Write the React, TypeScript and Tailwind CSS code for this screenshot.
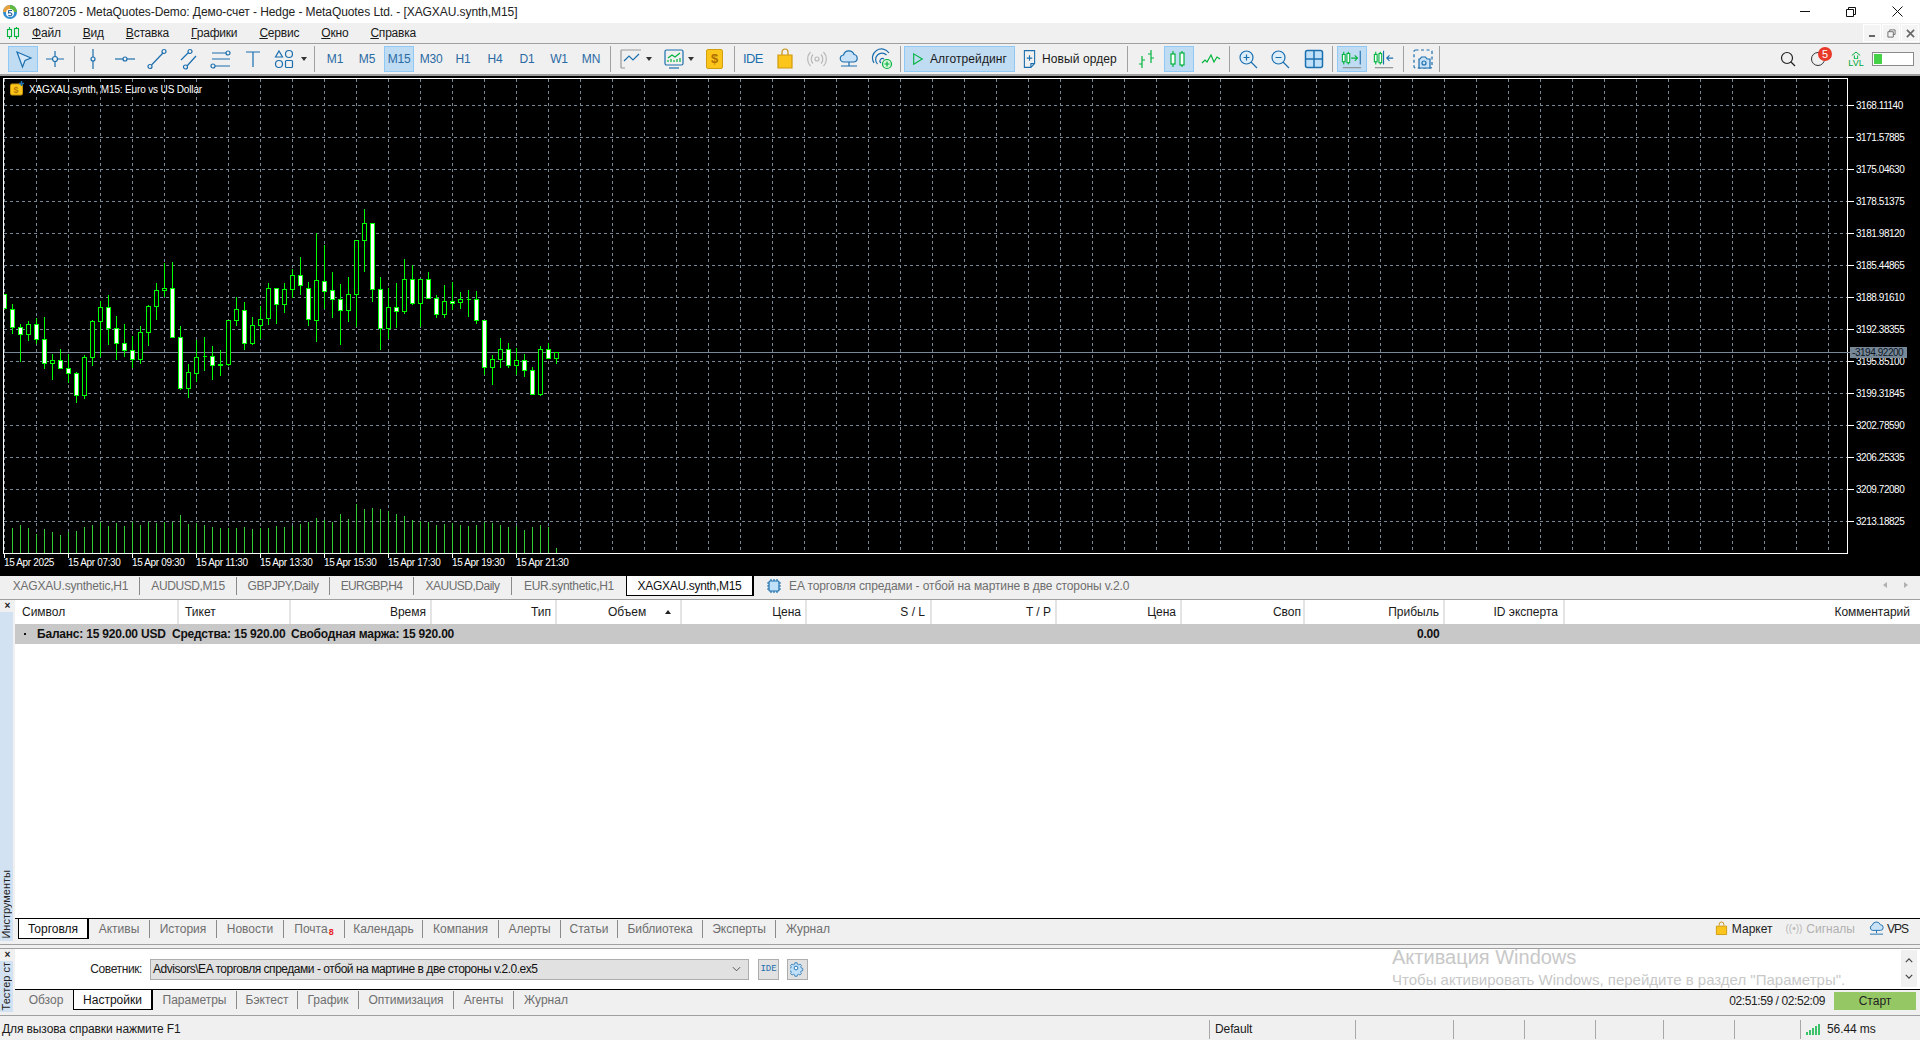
import type { ReactNode } from 'react';

const BLUE = '#1c6fae';
const GREEN = '#00b43c';

// [wick top, body top, body bottom, wick bottom, filled]
const CANDLES: [number, number, number, number, boolean][] = [
  [283, 283, 325, 325, true], [312, 328, 382, 402, true], [372, 380, 403, 485, true], [363, 373, 403, 423, false],
  [355, 373, 418, 432, true], [352, 418, 490, 507, true], [462, 481, 490, 540, false], [447, 481, 505, 508, true],
  [462, 505, 520, 550, true], [517, 520, 586, 608, true], [465, 472, 586, 597, false], [360, 364, 472, 497, false],
  [302, 322, 364, 470, false], [285, 322, 385, 435, true], [348, 385, 430, 480, true], [372, 430, 451, 470, true],
  [408, 451, 478, 505, true], [378, 397, 478, 492, false], [316, 319, 397, 438, false], [249, 271, 319, 360, false],
  [190, 265, 271, 290, false], [186, 265, 412, 412, true], [378, 412, 565, 570, true], [492, 517, 565, 594, false],
  [420, 472, 520, 545, false], [411, 469, 469, 513, false], [438, 469, 496, 540, true], [450, 492, 496, 528, true],
  [360, 361, 493, 497, false], [292, 328, 361, 378, false], [306, 331, 430, 450, true], [351, 376, 430, 435, false],
  [319, 358, 376, 417, false], [249, 265, 355, 375, false], [265, 265, 313, 372, true], [249, 268, 313, 339, false],
  [207, 226, 268, 295, false], [171, 226, 256, 285, true], [247, 265, 358, 378, true], [100, 241, 361, 426, false],
  [135, 244, 274, 327, true], [216, 271, 298, 354, true], [252, 298, 331, 435, true], [231, 283, 331, 366, false],
  [121, 121, 283, 381, false], [27, 70, 121, 216, false], [70, 70, 268, 306, true], [232, 268, 385, 450, true],
  [264, 322, 385, 417, false], [249, 322, 334, 385, true], [178, 238, 334, 342, false], [196, 238, 310, 315, true],
  [238, 238, 310, 381, false], [216, 238, 295, 298, true], [285, 295, 343, 354, true], [255, 304, 343, 354, false],
  [246, 304, 308, 330, true], [276, 298, 307, 327, false], [270, 298, 298, 351, false], [273, 298, 361, 372, true],
  [361, 361, 502, 525, true], [465, 478, 502, 555, false], [414, 448, 478, 504, false], [430, 448, 496, 504, true],
  [444, 481, 496, 525, false], [462, 481, 511, 531, true], [502, 511, 583, 585, true], [438, 448, 583, 587, false],
  [428, 448, 475, 478, true], [457, 457, 475, 492, false],
];

const VOLUMES = [
  83, 75, 83, 102, 87, 96, 105, 96, 93, 81, 75, 65, 78, 69, 78, 65, 75, 65, 69, 65, 65, 45, 71, 69, 75, 81, 84, 84, 84,
  81, 87, 84, 84, 78, 81, 78, 72, 65, 54, 60, 65, 42, 57, 12, 27, 24, 27, 33, 42, 48, 60, 63, 65, 75, 72, 69, 75, 78,
  75, 66, 69, 75, 81, 78, 90, 81, 75, 81, 145,
];

const PRICES = [
  '3168.11140', '3171.57885', '3175.04630', '3178.51375', '3181.98120', '3185.44865', '3188.91610',
  '3192.38355', '3195.85100', '3199.31845', '3202.78590', '3206.25335', '3209.72080', '3213.18825',
];

const TIMES = [
  '15 Apr 2025', '15 Apr 07:30', '15 Apr 09:30', '15 Apr 11:30', '15 Apr 13:30',
  '15 Apr 15:30', '15 Apr 17:30', '15 Apr 19:30', '15 Apr 21:30',
];

function Chart() {
  const rows = PRICES.map((_, i) => 105.5 + 32 * i);
  const cols = Array.from({ length: 58 }, (_, i) => 4.5 + 32 * i);
  return (
    <svg width="1920" height="499" viewBox="0 76 1920 499" className="block" shapeRendering="crispEdges">
      <defs>
        <clipPath id="plot">
          <rect x="4" y="79" width="1843" height="474" />
        </clipPath>
      </defs>
      <rect x="0" y="76" width="1920" height="499" fill="#000" />
      {cols.map((x) => (
        <line key={x} x1={x} x2={x} y1="79" y2="553" stroke="#778899" strokeDasharray="3 3" />
      ))}
      {rows.map((y) => (
        <line key={y} x1="4" x2="1847" y1={y} y2={y} stroke="#778899" strokeDasharray="3 3" />
      ))}
      <g clipPath="url(#plot)">
        {VOLUMES.map((v, i) => (
          <line key={i} x1={12.5 + 8 * i} x2={12.5 + 8 * i} y1={500 + v / 3} y2="553" stroke="#32cd32" />
        ))}
        <line x1="4" x2="1847" y1="352.5" y2="352.5" stroke="#778899" />
        {CANDLES.map(([wt, bt, bb, wb, filled], i) => {
          const x = 4.5 + 8 * i;
          const top = Math.round(200 + bt / 3) + 0.5;
          const bot = Math.round(200 + bb / 3) + 0.5;
          return (
            <g key={i}>
              <line x1={x} x2={x} y1={200 + wt / 3} y2={200 + wb / 3} stroke="#00ff00" />
              <path
                d={`M${x - 2} ${top}H${x + 2}V${bot}H${x - 2}Z`}
                fill={filled ? '#fff' : '#000'}
                stroke="#00ff00"
              />
            </g>
          );
        })}
      </g>
      <rect x="3.5" y="78.5" width="1844" height="475" fill="none" stroke="#fff" />
      {rows.map((y) => (
        <line key={y} x1="1847" x2="1854" y1={y} y2={y} stroke="#fff" />
      ))}
      {TIMES.map((_, i) => {
        const x = i === 0 ? 4.5 : 68.5 + 64 * (i - 1);
        return <line key={i} x1={x} x2={x} y1="553" y2="558" stroke="#fff" />;
      })}
      <g fontSize="10" fill="#fff" fontFamily="'Liberation Sans', sans-serif" shapeRendering="auto">
        {PRICES.map((p, i) => (
          <text key={p} x="1856" y={rows[i] + 3.5} letterSpacing="-0.45">
            {p}
          </text>
        ))}
        {TIMES.map((t, i) => (
          <text key={t} x={i === 0 ? 4 : 68 + 64 * (i - 1)} y="566" letterSpacing="-0.35">
            {t}
          </text>
        ))}
        <text x="29" y="93" letterSpacing="-0.15">
          XAGXAU.synth, M15:  Euro vs US Dollar
        </text>
      </g>
      <rect x="1850" y="347" width="57" height="11" fill="#778899" />
      <line x1="1847" x2="1850" y1="352.5" y2="352.5" stroke="#778899" />
      <text x="1852" y="356" fontSize="10" fill="#0b1520" letterSpacing="-0.45" fontFamily="'Liberation Sans', sans-serif" shapeRendering="auto">
        -3194.92200
      </text>
      <g shapeRendering="auto">
        <rect x="10.5" y="84" width="12" height="11" rx="1.5" fill="#fbc51b" stroke="#c8960c" />
        <text x="13.5" y="93" fontSize="9" fontWeight="700" fill="#b87a00" fontFamily="'Liberation Sans', sans-serif">
          $
        </text>
        <path d="M21.5 81v5M19 83.500h5" stroke="#1c6fae" strokeWidth="1.500" />
      </g>
    </svg>
  );
}

function Ic({ children, className = 'w-[22px] h-[22px]', box = '0 0 22 22' }: { children: ReactNode; className?: string; box?: string }) {
  return (
    <svg viewBox={box} className={`${className} shrink-0`} fill="none" stroke={BLUE} strokeWidth="1.200">
      {children}
    </svg>
  );
}

function Btn({ children, active, className = 'w-[32px]' }: { children: ReactNode; active?: boolean; className?: string }) {
  return (
    <div className={`${className} h-[26px] shrink-0 flex items-center justify-center`}>
      <div className={`w-[30px] h-[26px] flex items-center justify-center border ${active ? 'bg-[#c0dcf3] border-[#90c8f6]' : 'border-transparent'}`}>
        {children}
      </div>
    </div>
  );
}

function Sep({ className = 'w-[6px]' }: { className?: string }) {
  return (
    <div className={`${className} h-[26px] shrink-0 flex justify-center`}>
      <div className="w-px h-full bg-[#a0a0a0]" />
    </div>
  );
}

function Caret() {
  return <div className="w-0 h-0 border-x-[3.500px] border-x-transparent border-t-[4px] border-t-[#333] shrink-0" />;
}

function Period({ label, active }: { label: string; active?: boolean }) {
  return (
    <Btn active={active}>
      <span className="text-[#2a6aa3] tracking-[-0.2px]">{label}</span>
    </Btn>
  );
}

function Candles({ stroke = GREEN }: { stroke?: string }) {
  return (
    <g stroke={stroke}>
      <path d="M5 3v16M14 3v16" />
      <rect x="3" y="6" width="4" height="10" fill="#fff" />
      <rect x="12" y="5" width="4" height="12" fill="#fff" />
    </g>
  );
}

function Toolbar() {
  return (
    <div className="h-[31px] border-t border-[#a0a0a0] flex items-center pl-[7px] shrink-0">
      <Btn active>
        <Ic>
          <path d="M5 4l14 6-6 2.500L10.500 19z" fill="#d8eafa" />
        </Ic>
      </Btn>
      <Btn>
        <Ic>
          <path d="M11 3v16M2 11h18" />
          <circle cx="11" cy="11" r="2.500" fill="#f0f0f0" />
        </Ic>
      </Btn>
      <Sep />
      <Btn>
        <Ic>
          <path d="M11 1v20" />
          <circle cx="11" cy="11" r="2" fill="#f0f0f0" />
        </Ic>
      </Btn>
      <Btn>
        <Ic>
          <path d="M1 11h20" />
          <circle cx="11" cy="11" r="2" fill="#f0f0f0" />
        </Ic>
      </Btn>
      <Btn>
        <Ic>
          <path d="M5.500 17L17 5" />
          <circle cx="4" cy="18.500" r="2" />
          <circle cx="18" cy="3.500" r="2" />
        </Ic>
      </Btn>
      <Btn>
        <Ic>
          <path d="M3 12l7-7M9 18l9-10" />
          <circle cx="12" cy="3.500" r="2" />
          <circle cx="7.500" cy="19" r="2" />
        </Ic>
      </Btn>
      <Btn>
        <Ic>
          <path d="M2 5h14M2 11h18M5 18h15" />
          <circle cx="18" cy="5" r="2" />
          <circle cx="3" cy="18" r="2" />
        </Ic>
      </Btn>
      <Btn>
        <Ic>
          <path d="M4 4h14M11 4v15" />
        </Ic>
      </Btn>
      <div className="w-[40px] h-[26px] shrink-0 flex items-center pl-[4px] gap-[6px]">
        <Ic>
          <path d="M6 3l3.500 6h-7z" />
          <circle cx="16" cy="6" r="3.500" />
          <circle cx="6" cy="16" r="3.500" />
          <rect x="12.500" y="12.500" width="7" height="7" rx="1" />
        </Ic>
        <Caret />
      </div>
      <Sep className="w-[10px]" />
      {['M1', 'M5'].map((p) => <Period key={p} label={p} />)}
      <Period label="M15" active />
      {['M30', 'H1', 'H4', 'D1', 'W1', 'MN'].map((p) => <Period key={p} label={p} />)}
      <Sep />
      <div className="w-[44px] h-[26px] shrink-0 flex items-center gap-[4px] pl-[7px]">
        <Ic>
          <path d="M1 2h20M1 2v18M1 20h4" stroke="#999" />
          <path d="M4 13l5-5 4 4 6-6" />
        </Ic>
        <Caret />
      </div>
      <div className="w-[40px] h-[26px] shrink-0 flex items-center gap-[3px] pl-[6px]">
        <Ic>
          <rect x="2" y="2" width="18" height="15" rx="1.500" />
          <path d="M5 10l4-3 3 2 5-4" stroke={GREEN} />
          <path d="M5 14v-2M8 14v-3M11 14v-2M14 14v-3M17 14v-4" stroke={GREEN} />
          <path d="M6 20h10" />
        </Ic>
        <Caret />
      </div>
      <Btn className="w-[33px] ml-px">
        <div className="w-[17px] h-[20px] rounded-[2px] bg-[#fbc51b] border border-[#d2a00f] flex items-center justify-center text-[#b06f00] font-bold text-[13px]">$</div>
      </Btn>
      <Sep />
      <Btn>
        <span className="text-[#1c6fae] text-[13px] tracking-[-0.6px]">IDE</span>
      </Btn>
      <Btn>
        <Ic>
          <path d="M8 7V4a3 3 0 0 1 6 0v3" stroke="#c89010" />
          <path d="M4 7h14v13H4z" fill="#fbc51b" stroke="#d19b10" />
        </Ic>
      </Btn>
      <Btn>
        <Ic>
          <g stroke="#b8b8b8">
            <circle cx="11" cy="11" r="2" />
            <path d="M7 6.500a6.500 6.500 0 0 0 0 9M15 6.500a6.500 6.500 0 0 1 0 9M4.500 4a10 10 0 0 0 0 14M17.500 4a10 10 0 0 1 0 14" />
          </g>
        </Ic>
      </Btn>
      <Btn>
        <Ic>
          <path d="M6 14a3.500 3.500 0 0 1-.5-7 5.500 5.500 0 0 1 10.500-.5 3.800 3.800 0 0 1 0 7.500z" fill="#c9e2f7" />
          <path d="M11 14v4M3 18h16" />
        </Ic>
      </Btn>
      <Btn className="w-[32px] ml-px">
        <Ic>
          <path d="M3 15a9 9 0 0 1 15-10M6.500 16a6 6 0 0 1 9-9M10 15a2.500 2.500 0 0 1 3-4" />
          <circle cx="16" cy="16" r="4.500" fill="#d6f5dc" stroke={GREEN} />
          <path d="M16 13.500v5M13.500 16h5" stroke={GREEN} />
        </Ic>
      </Btn>
      <Sep className="w-[5px]" />
      <div className="ml-px w-[111px] h-[26px] shrink-0 flex items-center bg-[#c0dcf3] border border-[#90c8f6] pl-[7px] gap-[6px]">
        <svg viewBox="0 0 14 16" className="w-[12px] h-[14px] shrink-0" fill="none" stroke={GREEN} strokeWidth="1.300">
          <path d="M2 2l10 6-10 6z" />
        </svg>
        <span className="text-[#1a1a1a] tracking-[0.1px]">Алготрейдинг</span>
      </div>
      <div className="w-[110px] h-[26px] shrink-0 flex items-center pl-[8px] gap-[6px]">
        <svg viewBox="0 0 14 20" className="w-[13px] h-[20px] shrink-0" fill="none" stroke={BLUE} strokeWidth="1.200">
          <path d="M1.500 1h11v14l-4 4h-7zM12.500 15h-4v4M7 6v6M4 9h6" />
        </svg>
        <span className="text-[#1a1a1a] tracking-[0.1px]">Новый ордер</span>
      </div>
      <Sep className="w-[5px]" />
      <div className="w-px shrink-0" />
      <Btn>
        <Ic>
          <g stroke={GREEN}>
            <path d="M6 8v12M3 16h3M6 12h3M15 2v13M12 6h3M15 10h3" />
          </g>
        </Ic>
      </Btn>
      <Btn active>
        <Ic>
          <Candles />
        </Ic>
      </Btn>
      <Btn>
        <Ic>
          <path d="M2 15l3-3 2 2 4-7 3 7 3-5 3 2" stroke={GREEN} />
        </Ic>
      </Btn>
      <Sep className="w-[5px]" />
      <Btn>
        <Ic>
          <circle cx="9.500" cy="9.500" r="6.500" fill="#dcedfb" />
          <path d="M14 14l6 6M9.500 6.500v6M6.500 9.500h6" />
        </Ic>
      </Btn>
      <Btn>
        <Ic>
          <circle cx="9.500" cy="9.500" r="6.500" fill="#dcedfb" />
          <path d="M14 14l6 6M6.500 9.500h6" />
        </Ic>
      </Btn>
      <Btn className="w-[33px] ml-px">
        <Ic>
          <rect x="2.500" y="2.500" width="17" height="17" rx="2" fill="#bfe0f8" strokeWidth="1.500" />
          <path d="M11 2.500v17M2.500 11h17" strokeWidth="1.500" />
        </Ic>
      </Btn>
      <Sep className="w-[5px]" />
      <div className="w-px shrink-0" />
      <Btn active>
        <Ic box="0 0 24 22">
          <g stroke={GREEN}>
            <path d="M3 3v14M8 3v14" />
            <rect x="1.500" y="6" width="3" height="8" fill="#fff" />
            <rect x="6.500" y="5" width="3" height="10" fill="#fff" />
            <path d="M11 10h7M15 7l3 3-3 3" />
          </g>
          <path d="M21 2v15" />
          <path d="M2 20.500h20" stroke="#8a8a8a" />
        </Ic>
      </Btn>
      <Btn>
        <Ic box="0 0 24 22">
          <g stroke={GREEN}>
            <path d="M3 3v14M8 3v14" />
            <rect x="1.500" y="6" width="3" height="8" fill="#fff" />
            <rect x="6.500" y="5" width="3" height="10" fill="#fff" />
          </g>
          <path d="M11.500 2v15M22 10h-7M18 7l-3 3 3 3" />
          <path d="M2 20.500h20" stroke="#8a8a8a" />
        </Ic>
      </Btn>
      <Sep />
      <div className="w-px shrink-0" />
      <Btn>
        <Ic>
          <rect x="2" y="2" width="18" height="18" rx="1.500" strokeDasharray="3 2.500" />
          <path d="M8 11l1.500-2h4l1.500 2h3v9H7v-9z" fill="#c9e2f7" />
          <circle cx="12" cy="15" r="2" />
        </Ic>
      </Btn>
      <div className="w-px h-[26px] bg-[#a0a0a0] shrink-0" />
      <div className="ml-auto flex items-center h-[26px] pr-[6px] shrink-0">
        <svg viewBox="0 0 16 16" className="w-[16px] h-[16px]" fill="none" stroke="#222" strokeWidth="1.200">
          <circle cx="7" cy="7" r="5.500" />
          <path d="M11 11l4 4" />
        </svg>
        <div className="relative w-[14px] h-[14px] ml-[15px] rounded-full border border-[#333]">
          <div className="absolute top-[-6px] left-[6px] w-[14px] h-[14px] rounded-full bg-[#e8392a] text-white text-[11px] leading-[14px] text-center">5</div>
        </div>
        <div className="ml-[24px] w-[14px] flex flex-col items-center text-[#00a838] text-[9px] leading-[9px]">
          <svg viewBox="0 0 12 9" className="w-[10px] h-[8px]" fill="none" stroke={GREEN} strokeWidth="1.200">
            <path d="M1 5l5-4 5 4M4 5v4h4V5" />
          </svg>
          LVL
        </div>
        <div className="ml-[9px] w-[42px] h-[14px] border border-[#8a8a8a] bg-white p-px">
          <div className="w-[8px] h-full bg-[#46d246]" />
        </div>
      </div>
    </div>
  );
}

function MdiButton({ children }: { children: ReactNode }) {
  return <div className="w-[18px] h-[18px] bg-[#f4f4f4] border border-white flex items-center justify-center">{children}</div>;
}

function Menu() {
  const items: [string, string][] = [
    ['Ф', 'айл'], ['В', 'ид'], ['В', 'ставка'], ['Г', 'рафики'], ['С', 'ервис'], ['О', 'кно'], ['С', 'правка'],
  ];
  return (
    <div className="h-[20px] flex items-center shrink-0 pl-[6px]">
      <svg viewBox="0 0 14 14" className="w-[14px] h-[14px] mr-[12px]" fill="none" stroke={GREEN} strokeWidth="1.100">
        <path d="M3.500 1v12M10.500 1v12" />
        <rect x="1.500" y="3.500" width="4" height="7" fill="#f0f0f0" />
        <rect x="8.500" y="2.500" width="4" height="8" fill="#f0f0f0" />
      </svg>
      <div className="flex gap-[22px] text-[#1a1a1a] tracking-[-0.2px]">
        {items.map(([a, b], i) => (
          <span key={i}>
            <span className="underline">{a}</span>
            {b}
          </span>
        ))}
      </div>
      <div className="ml-auto flex gap-px pr-px">
        <MdiButton><div className="w-[6px] h-[2px] bg-[#666] mt-[6px]" /></MdiButton>
        <MdiButton>
          <svg viewBox="0 0 10 10" className="w-[9px] h-[9px]" fill="none" stroke="#666"><path d="M3 3V1h6v5H7M1 3h6v6H1z" /></svg>
        </MdiButton>
        <MdiButton>
          <svg viewBox="0 0 10 10" className="w-[9px] h-[9px]" fill="none" stroke="#666" strokeWidth="1.800"><path d="M1 1l8 8M9 1l-8 8" /></svg>
        </MdiButton>
      </div>
    </div>
  );
}

function TitleBar() {
  return (
    <div className="h-[23px] bg-white flex items-center shrink-0 pl-[2px]">
      <svg viewBox="0 0 16 16" className="w-[16px] h-[16px] mr-[5px]">
        <circle cx="8" cy="8" r="7" fill="#2f8ed1" />
        <path d="M8 1a7 7 0 0 1 7 7H8z" fill="#63b93f" />
        <path d="M1 8a7 7 0 0 1 7-7v7z" fill="#e9a13b" />
        <circle cx="8" cy="9" r="4" fill="#fff" />
        <path d="M10 6.500H6.800l-.3 2.500c2-.7 3.400 0 3.400 1.300 0 1.500-2 2-3.500 1" fill="none" stroke="#1d5f98" strokeWidth="1.100" />
      </svg>
      <span className="text-[#222] tracking-[-0.08px]">81807205 - MetaQuotes-Demo: Демо-счет - Hedge - MetaQuotes Ltd. - [XAGXAU.synth,M15]</span>
      <div className="ml-auto flex h-full">
        <div className="w-[46px] flex items-center justify-center"><div className="w-[10px] h-px bg-[#111]" /></div>
        <div className="w-[46px] flex items-center justify-center">
          <svg viewBox="0 0 10 10" className="w-[10px] h-[10px]" fill="none" stroke="#111"><path d="M2.500 2.500V.5h7v7h-2M.5 2.500h7v7h-7z" /></svg>
        </div>
        <div className="w-[46px] flex items-center justify-center">
          <svg viewBox="0 0 11 11" className="w-[11px] h-[11px]" fill="none" stroke="#111"><path d="M.5.5l10 10M10.500.5l-10 10" /></svg>
        </div>
      </div>
    </div>
  );
}

// vertical divider between inactive tabs sits on the right edge
function Tab({ label, className, sep = true, children }: { label: string; className: string; sep?: boolean; children?: ReactNode }) {
  return (
    <div className={`${className} h-[18px] shrink-0 flex items-center justify-center text-[#6e6e6e] ${sep ? 'border-r border-[#8a8a8a]' : ''}`}>
      {label}
      {children}
    </div>
  );
}

function ActiveTab({ label, className }: { label: string; className: string }) {
  return (
    <div className={`${className} h-[20px] shrink-0 flex items-center justify-center bg-white text-[#111] border-x border-b border-black border-r-2`}>
      {label}
    </div>
  );
}

function ChartTabs() {
  return (
    <div className="h-[21px] border-t border-black flex items-start pl-[2px] shrink-0 relative">
      <div className="flex items-center h-[19px]">
        <Tab label="XAGXAU.synthetic,H1" className="w-[138px] tracking-[-0.2px]" />
        <Tab label="AUDUSD,M15" className="w-[97px] tracking-[-0.4px]" />
        <Tab label="GBPJPY,Daily" className="w-[93px] tracking-[-0.4px]" />
        <Tab label="EURGBP,H4" className="w-[84px] tracking-[-0.7px]" />
        <Tab label="XAUUSD,Daily" className="w-[98px] tracking-[-0.5px]" />
        <Tab label="EUR.synthetic,H1" className="w-[114px] tracking-[-0.3px]" sep={false} />
      </div>
      <ActiveTab label="XAGXAU.synth,M15" className="w-[128px] tracking-[-0.3px]" />
      <div className="flex items-center h-[19px] pl-[12px] text-[#6e6e6e] tracking-[-0.1px]">
        <svg viewBox="0 0 16 16" className="w-[16px] h-[16px] mr-[7px]" fill="#bfe0f8" stroke={BLUE} strokeWidth="1.200">
          <rect x="3" y="3" width="10" height="10" rx="1" />
          <path d="M1 5h2M1 8h2M1 11h2M13 5h2M13 8h2M13 11h2M5 1v2M8 1v2M11 1v2M5 13v2M8 13v2M11 13v2" />
        </svg>
        EA торговля спредами - отбой на мартине в две стороны v.2.0
      </div>
      <div className="absolute right-[12px] top-[6px] flex gap-[17px]">
        <div className="w-0 h-0 border-y-[3.500px] border-y-transparent border-r-[4px] border-r-[#b0b0b0]" />
        <div className="w-0 h-0 border-y-[3.500px] border-y-transparent border-l-[4px] border-l-[#b0b0b0]" />
      </div>
    </div>
  );
}

const COLUMNS: [string, string][] = [
  ['Символ', 'w-[164px] justify-start pl-[7px]'],
  ['Тикет', 'w-[112px] justify-start pl-[6px]'],
  ['Время', 'w-[141px] justify-end pr-[4px]'],
  ['Тип', 'w-[125px] justify-end pr-[4px]'],
  ['Объем', 'w-[125px] justify-start pl-[5px]'],
  ['Цена', 'w-[125px] justify-end pr-[4px]'],
  ['S / L', 'w-[125px] justify-end pr-[5px]'],
  ['T / P', 'w-[125px] justify-end pr-[4px]'],
  ['Цена', 'w-[125px] justify-end pr-[4px]'],
  ['Своп', 'w-[123px] justify-end pr-[2px]'],
  ['Прибыль', 'w-[140px] justify-end pr-[4px]'],
  ['ID эксперта', 'w-[120px] justify-end pr-[5px]'],
];

function TradeTable() {
  return (
    <div className="flex-1 bg-white min-h-0">
      <div className="h-[24px] flex text-[#1a1a1a]">
        {COLUMNS.map(([label, cls], i) => (
          <div key={i} className={`${cls} shrink-0 flex items-center border-r-2 border-[#e4e4e4]`}>
            {label === 'Объем' ? (
              <>
                <span className="ml-[46px]">{label}</span>
                <div className="ml-[19px] w-0 h-0 border-x-[3.500px] border-x-transparent border-b-[4px] border-b-[#222]" />
              </>
            ) : (
              label
            )}
          </div>
        ))}
        <div className="flex-1 flex items-center justify-end pr-[10px]">Комментарий</div>
      </div>
      <div className="h-[20px] bg-[#c8c8c8] flex items-center font-bold text-[#111] tracking-[-0.2px] relative">
        <div className="w-[2px] h-[2px] bg-[#111] ml-[9px] mr-[11px]" />
        <span className="w-[135px] shrink-0">Баланс: 15 920.00 USD</span>
        <span className="w-[119px] shrink-0">Средства: 15 920.00</span>
        <span>Свободная маржа: 15 920.00</span>
        <span className="absolute left-[1402px] top-[3px]">0.00</span>
      </div>
    </div>
  );
}

function SideStrip({ label, blueClass }: { label: string; blueClass: string }) {
  return (
    <div className="w-[15px] shrink-0 flex flex-col">
      <div className="h-[12px] shrink-0 flex items-center justify-center font-bold text-[10px] leading-none text-[#222]">×</div>
      <div className={`${blueClass} w-[13px] flex items-end justify-center bg-[#d3e2f2] pb-[2px]`}>
        <span className="[writing-mode:vertical-rl] rotate-180 text-[11px] leading-[13px] text-[#222] whitespace-nowrap">{label}</span>
      </div>
    </div>
  );
}

function Toolbox() {
  return (
    <div className="h-[341px] flex shrink-0">
      <SideStrip label="Инструменты" blueClass="h-[329px]" />
      <div className="flex-1 flex flex-col min-w-0">
        <TradeTable />
        <div className="h-[23px] border-t border-black flex items-start pl-[3px] relative shrink-0">
          <ActiveTab label="Торговля" className="w-[71px]" />
          <div className="flex items-center h-[19px]">
            <Tab label="Активы" className="w-[61px]" />
            <Tab label="История" className="w-[67px]" />
            <Tab label="Новости" className="w-[67px]" />
            <Tab label="Почта" className="w-[61px]">
              <span className="text-[#e81e1e] text-[9px] font-bold mt-[7px] ml-px">8</span>
            </Tab>
            <Tab label="Календарь" className="w-[78px]" />
            <Tab label="Компания" className="w-[76px]" />
            <Tab label="Алерты" className="w-[62px]" />
            <Tab label="Статьи" className="w-[57px]" />
            <Tab label="Библиотека" className="w-[85px]" />
            <Tab label="Эксперты" className="w-[73px]" />
            <Tab label="Журнал" className="w-[64px]" sep={false} />
          </div>
          <div className="ml-auto h-[19px] flex items-center pr-[12px] text-[#222]">
            <svg viewBox="0 0 14 16" className="w-[13px] h-[15px] mr-[4px]" fill="none">
              <path d="M4.500 5V3.500a2.500 2.500 0 0 1 5 0V5" stroke="#c89010" />
              <path d="M1.500 5.500h11v9h-11z" fill="#fbc51b" stroke="#d19b10" />
            </svg>
            <span className="mr-[13px]">Маркет</span>
            <span className="text-[#b8b8b8] text-[10px] mr-[4px]">((•))</span>
            <span className="text-[#b0b0b0] mr-[13px]">Сигналы</span>
            <svg viewBox="0 0 18 16" className="w-[17px] h-[15px] mr-[2px]" fill="#c9e2f7" stroke={BLUE}>
              <path d="M5 10a2.800 2.800 0 0 1-.5-5.500 4.500 4.500 0 0 1 8.600-.5 3 3 0 0 1 0 6z" />
              <path d="M9 10v3M2 14h14" />
            </svg>
            <span className="tracking-[-1px]">VPS</span>
          </div>
        </div>
      </div>
    </div>
  );
}

function Tester() {
  return (
    <div className="h-[63px] flex shrink-0">
      <SideStrip label="Тестер ст" blueClass="h-[51px]" />
      <div className="flex-1 flex flex-col min-w-0">
        <div className="h-[40px] bg-white flex items-center relative shrink-0">
          <span className="w-[127px] text-right text-[#222] shrink-0 tracking-[-0.4px]">Советник:</span>
          <div className="ml-[8px] w-[599px] h-[21px] shrink-0 bg-[#e1e1e1] border border-[#adadad] flex items-center pl-[2px] text-[#111] tracking-[-0.47px]">
            Advisors\EA торговля спредами - отбой на мартине в две стороны v.2.0.ex5
            <svg viewBox="0 0 10 6" className="w-[9px] h-[6px] ml-auto mr-[7px]" fill="none" stroke="#444"><path d="M1 1l4 4 4-4" /></svg>
          </div>
          <div className="ml-[9px] w-[21px] h-[21px] shrink-0 bg-[#e1e1e1] border border-[#adadad] flex items-center justify-center text-[9px] text-[#1c6fae] font-['Liberation_Mono',monospace]">IDE</div>
          <div className="ml-[8px] w-[21px] h-[21px] shrink-0 bg-[#e1e1e1] border border-[#adadad] flex items-center justify-center">
            <svg viewBox="0 0 16 16" className="w-[15px] h-[15px]" fill="#bfe0f8" stroke={BLUE}>
              <path d="M6.500 1h3l.4 2 1.800.8 1.700-1.100 2 2-1.100 1.700.7 1.600 2 .5v3l-2 .4-.8 1.700 1.100 1.800-2 2-1.800-1.100-1.600.7-.4 2h-3l-.4-2-1.700-.7-1.700 1.100-2-2 1.100-1.800-.8-1.700-2-.4v-3l2-.5.7-1.600-1.100-1.700 2-2 1.700 1.100 1.800-.8z" transform="scale(.8)" />
              <circle cx="6.400" cy="6.400" r="2" fill="#fff" />
            </svg>
          </div>
          <div className="absolute left-[1377px] top-[-2px] text-[20px] leading-[20px] text-[#c8c8c8]">Активация Windows</div>
          <div className="absolute left-[1377px] top-[23px] text-[15px] leading-[16px] text-[#c8c8c8] whitespace-nowrap">Чтобы активировать Windows, перейдите в раздел "Параметры".</div>
          <div className="absolute right-[3px] top-px bottom-[2px] w-[16px] bg-[#f0f0f0] flex flex-col items-center justify-between py-[8px]">
            <svg viewBox="0 0 10 6" className="w-[8px] h-[5px]" fill="none" stroke="#444" strokeWidth="1.500"><path d="M1 5l4-4 4 4" /></svg>
            <svg viewBox="0 0 10 6" className="w-[8px] h-[5px]" fill="none" stroke="#444" strokeWidth="1.500"><path d="M1 1l4 4 4-4" /></svg>
          </div>
        </div>
        <div className="h-[23px] border-t border-black flex items-start shrink-0 pl-[4px]">
          <div className="flex items-center h-[19px]">
            <Tab label="Обзор" className="w-[54px]" sep={false} />
          </div>
          <ActiveTab label="Настройки" className="w-[80px]" />
          <div className="flex items-center h-[19px]">
            <Tab label="Параметры" className="w-[84px]" />
            <Tab label="Бэктест" className="w-[61px]" />
            <Tab label="График" className="w-[61px]" />
            <Tab label="Оптимизация" className="w-[95px]" />
            <Tab label="Агенты" className="w-[60px]" />
            <Tab label="Журнал" className="w-[64px]" sep={false} />
          </div>
          <div className="ml-auto flex items-center h-[21px] pr-[4px]">
            <span className="text-[#222] tracking-[-0.4px] mr-[9px]">02:51:59 / 02:52:09</span>
            <div className="w-[82px] h-[18px] bg-[#95c864] flex items-center justify-center text-[#222]">Старт</div>
          </div>
        </div>
      </div>
    </div>
  );
}

const STATUS_CELLS = ['w-[146px]', 'w-[98px]', 'w-[71px]', 'w-[71px]', 'w-[68px]', 'w-[71px]', 'w-[66px]'];

function StatusBar() {
  return (
    <div className="flex-1 border-t border-[#a0a0a0] flex items-center text-[#1a1a1a] mt-[3px] pt-[2px] tracking-[-0.1px]">
      <span className="w-[1209px] shrink-0 pl-[2px]">Для вызова справки нажмите F1</span>
      {STATUS_CELLS.map((w, i) => (
        <div key={i} className={`${w} h-[19px] shrink-0 border-l border-[#a8a8a8] pl-[5px] flex items-center`}>
          {i === 0 ? 'Default' : ''}
        </div>
      ))}
      <div className="h-[19px] border-l border-[#a8a8a8] pl-[5px] flex items-center gap-[6px]">
        <svg viewBox="0 0 15 11" className="w-[15px] h-[11px]" stroke={GREEN} strokeWidth="1.500">
          <path d="M1 11V8M4 11V6M7 11V4M10 11V2M13 11V0" />
        </svg>
        56.44 ms
      </div>
    </div>
  );
}

export default function App() {
  return (
    <div className="w-[1920px] h-[1040px] overflow-hidden flex flex-col bg-[#f0f0f0] text-[12px] leading-[14px] font-['Liberation_Sans',Arial,sans-serif]">
      <TitleBar />
      <Menu />
      <Toolbar />
      <div className="h-[2px] bg-[#a0a0a0] shrink-0" />
      <div className="h-[499px] shrink-0">
        <Chart />
      </div>
      <ChartTabs />
      <div className="h-[4px] border-b border-[#a0a0a0] shrink-0" />
      <Toolbox />
      <div className="h-[8px] shrink-0 pt-[3px]">
        <div className="h-[5px] border-y border-[#a0a0a0]" />
      </div>
      <Tester />
      <StatusBar />
    </div>
  );
}
